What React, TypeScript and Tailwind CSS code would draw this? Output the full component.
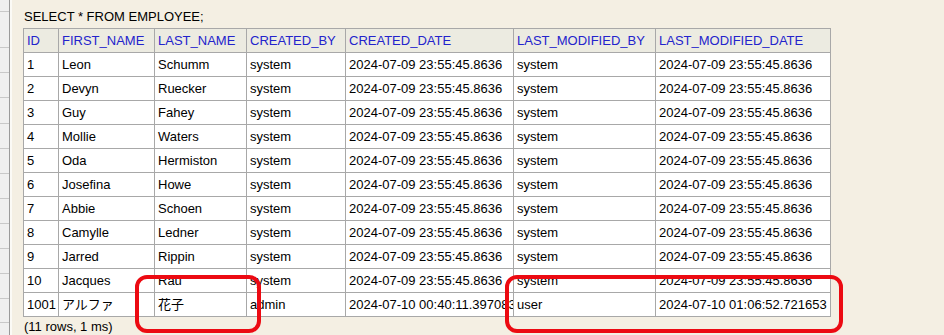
const columns = [
  { name: "ID", width: 35 },
  { name: "FIRST_NAME", width: 96 },
  { name: "LAST_NAME", width: 92 },
  { name: "CREATED_BY", width: 99 },
  { name: "CREATED_DATE", width: 168 },
  { name: "LAST_MODIFIED_BY", width: 142 },
  { name: "LAST_MODIFIED_DATE", width: 175 },
];

const seeded = "2024-07-09 23:55:45.8636";

const rows: string[][] = [
  ["1", "Leon", "Schumm", "system", seeded, "system", seeded],
  ["2", "Devyn", "Ruecker", "system", seeded, "system", seeded],
  ["3", "Guy", "Fahey", "system", seeded, "system", seeded],
  ["4", "Mollie", "Waters", "system", seeded, "system", seeded],
  ["5", "Oda", "Hermiston", "system", seeded, "system", seeded],
  ["6", "Josefina", "Howe", "system", seeded, "system", seeded],
  ["7", "Abbie", "Schoen", "system", seeded, "system", seeded],
  ["8", "Camylle", "Ledner", "system", seeded, "system", seeded],
  ["9", "Jarred", "Rippin", "system", seeded, "system", seeded],
  ["10", "Jacques", "Rau", "system", seeded, "system", seeded],
  ["1001", "アルファ", "花子", "admin", "2024-07-10 00:40:11.397083", "user", "2024-07-10 01:06:52.721653"],
];

const gutterLines = [11, 47, 72, 97, 123, 148, 173, 198, 223, 248, 273, 298, 322];

export default function App() {
  return (
    <div
      className="relative flex w-[944px] h-[335px] overflow-hidden bg-[#f4efe3] text-[13px] text-black"
      style={{ fontFamily: '"Liberation Sans", Arial, "Noto Sans CJK JP", sans-serif' }}
    >
      {/* left gutter of the console pane */}
      <div className="flex shrink-0">
        <div className="relative w-[9px] h-full bg-[#efefef]">
          {gutterLines.map((y) => (
            <div key={y} className="absolute left-0 w-full h-px bg-[#c8c8c8]" style={{ top: y }} />
          ))}
        </div>
        <div className="w-px h-full bg-[#9a9a9a]" />
        <div className="w-[2px] h-full bg-[#fbfaf6]" />
      </div>

      <div className="flex flex-col pl-[11px] pt-[9px]">
        <div className="h-[19px] leading-[15px] pl-px">SELECT * FROM EMPLOYEE;</div>
        <table className="table-fixed border-collapse w-[808px]">
          <colgroup>
            {columns.map((c) => (
              <col key={c.name} style={{ width: c.width }} />
            ))}
          </colgroup>
          <thead>
            <tr className="h-6 bg-[#ecebe1]">
              {columns.map((c) => (
                <th
                  key={c.name}
                  className="border border-[#a8a8a8] px-[3px] text-left font-normal text-[#2323cc] whitespace-nowrap overflow-hidden"
                >
                  {c.name}
                </th>
              ))}
            </tr>
          </thead>
          <tbody>
            {rows.map((r) => (
              <tr key={r[0]} className="h-6 bg-white">
                {r.map((v, i) => (
                  <td
                    key={i}
                    className="border border-[#a8a8a8] px-[3px] whitespace-nowrap overflow-hidden"
                  >
                    {v}
                  </td>
                ))}
              </tr>
            ))}
          </tbody>
        </table>
        <div className="pt-[1px] leading-[17px] pl-px">(11 rows, 1 ms)</div>
      </div>

      {/* annotation boxes */}
      <div className="absolute left-[135px] top-[275px] w-[126px] h-[58px] rounded-[12px] border-[4px] border-[#ec0a12]" />
      <div className="absolute left-[505px] top-[275px] w-[338px] h-[58px] rounded-[12px] border-[4px] border-[#ec0a12]" />
    </div>
  );
}
